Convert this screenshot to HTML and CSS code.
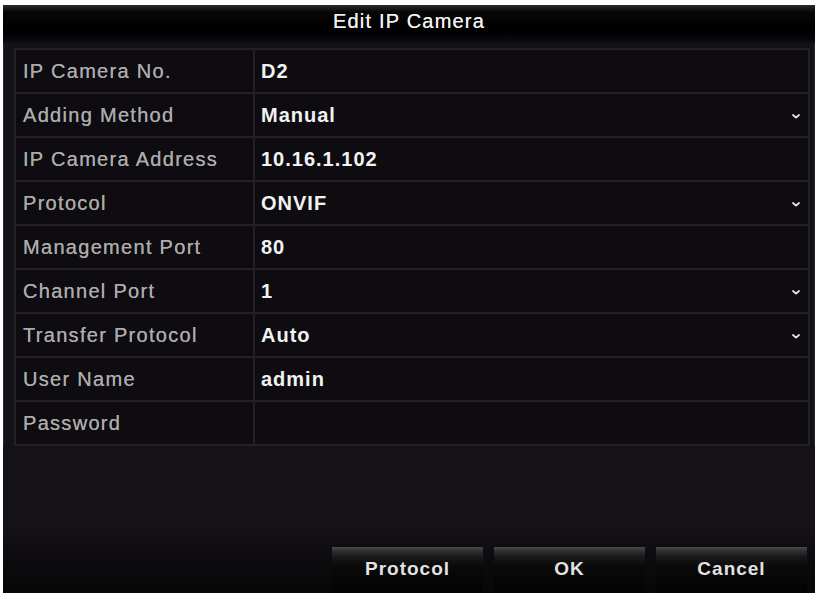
FILE: index.html
```html
<!DOCTYPE html>
<html lang="en">
<head>
<meta charset="utf-8">
<title>Edit IP Camera</title>
<link rel="stylesheet" href="styles.css">
</head>
<body>
<div class="frame">
  <div class="titlebar">Edit IP Camera</div>
  <div class="content">
    <div class="table">
      <div class="row"><div class="label">IP Camera No.</div><div class="value">D2</div></div>
      <div class="row"><div class="label">Adding Method</div><div class="value select">Manual<svg class="chev" viewBox="0 0 8 5"><path d="M1 1 L4 3.6 L7 1" fill="none" stroke="#e6e6e6" stroke-width="1.8" stroke-linecap="round"/></svg></div></div>
      <div class="row"><div class="label">IP Camera Address</div><div class="value">10.16.1.102</div></div>
      <div class="row"><div class="label">Protocol</div><div class="value select">ONVIF<svg class="chev" viewBox="0 0 8 5"><path d="M1 1 L4 3.6 L7 1" fill="none" stroke="#e6e6e6" stroke-width="1.8" stroke-linecap="round"/></svg></div></div>
      <div class="row"><div class="label">Management Port</div><div class="value">80</div></div>
      <div class="row"><div class="label">Channel Port</div><div class="value select">1<svg class="chev" viewBox="0 0 8 5"><path d="M1 1 L4 3.6 L7 1" fill="none" stroke="#e6e6e6" stroke-width="1.8" stroke-linecap="round"/></svg></div></div>
      <div class="row"><div class="label">Transfer Protocol</div><div class="value select">Auto<svg class="chev" viewBox="0 0 8 5"><path d="M1 1 L4 3.6 L7 1" fill="none" stroke="#e6e6e6" stroke-width="1.8" stroke-linecap="round"/></svg></div></div>
      <div class="row"><div class="label">User Name</div><div class="value">admin</div></div>
      <div class="row"><div class="label">Password</div><div class="value"></div></div>
    </div>
  </div>
  <div class="footer">
    <div class="btn">Protocol</div>
    <div class="btn">OK</div>
    <div class="btn">Cancel</div>
  </div>
</div>
</body>
</html>
```
FILE: styles.css
```css
html, body {
  margin: 0;
  padding: 0;
  background: #ffffff;
}
body {
  width: 818px;
  height: 595px;
  overflow: hidden;
  font-family: "Liberation Sans", Arial, sans-serif;
}
.frame {
  margin: 5px 3px 0 3px;
  width: 812px;
  height: 588px;
  background: #141117;
  display: flex;
  flex-direction: column;
  box-shadow: inset 1px 0 0 #2a2a2a, inset -1px 0 0 #2a2a2a;
}
.titlebar {
  height: 38px;
  flex: none;
  display: flex;
  align-items: center;
  justify-content: center;
  padding-bottom: 6px;
  box-sizing: border-box;
  color: #f0f0f0;
  font-size: 20px;
  letter-spacing: 1.2px;
  text-shadow: 0 0 0.6px #f0f0f0;
  background: linear-gradient(#2a2a2a 0, #070707 18%, #000 60%, #050406 85%, #110f13 100%);
}
.content {
  padding: 5px 5px 0 11px;
  flex: none;
}
.table {
  display: flex;
  flex-direction: column;
  gap: 2px;
  padding: 2px;
  background: #232125;
}
.row {
  display: flex;
  gap: 2px;
  height: 42px;
}
.label {
  width: 237px;
  flex: none;
  background: #0e0c10;
  color: #ababab;
  font-size: 20px;
  letter-spacing: 1.3px;
  text-shadow: 0 0 0.6px #ababab;
  display: flex;
  align-items: center;
  padding-left: 7px;
  box-sizing: border-box;
}
.value {
  flex: 1;
  background: #0e0c10;
  color: #f2f2f2;
  font-size: 20px;
  font-weight: bold;
  letter-spacing: 1px;
  display: flex;
  align-items: center;
  padding-left: 6px;
  padding-right: 8px;
  box-sizing: border-box;
}
.chev {
  width: 8px;
  height: 5px;
  margin-left: auto;
  margin-top: 3px;
}
.footer {
  flex: 1;
  display: flex;
  justify-content: flex-end;
  align-items: flex-end;
  gap: 11px;
  padding-right: 8px;
  background: linear-gradient(#141117 0, #141117 55%, #0c0a0d 80%, #070707 100%);
}
.btn {
  width: 151px;
  height: 46px;
  box-sizing: border-box;
  padding-bottom: 2px;
  display: flex;
  align-items: center;
  justify-content: center;
  color: #e2e2e2;
  font-size: 19px;
  font-weight: bold;
  letter-spacing: 1px;
  background: linear-gradient(#4a4a4c 0, #353537 3px, #1b1b1c 9px, #0a0a0a 40%, #030303 100%);
}
```
